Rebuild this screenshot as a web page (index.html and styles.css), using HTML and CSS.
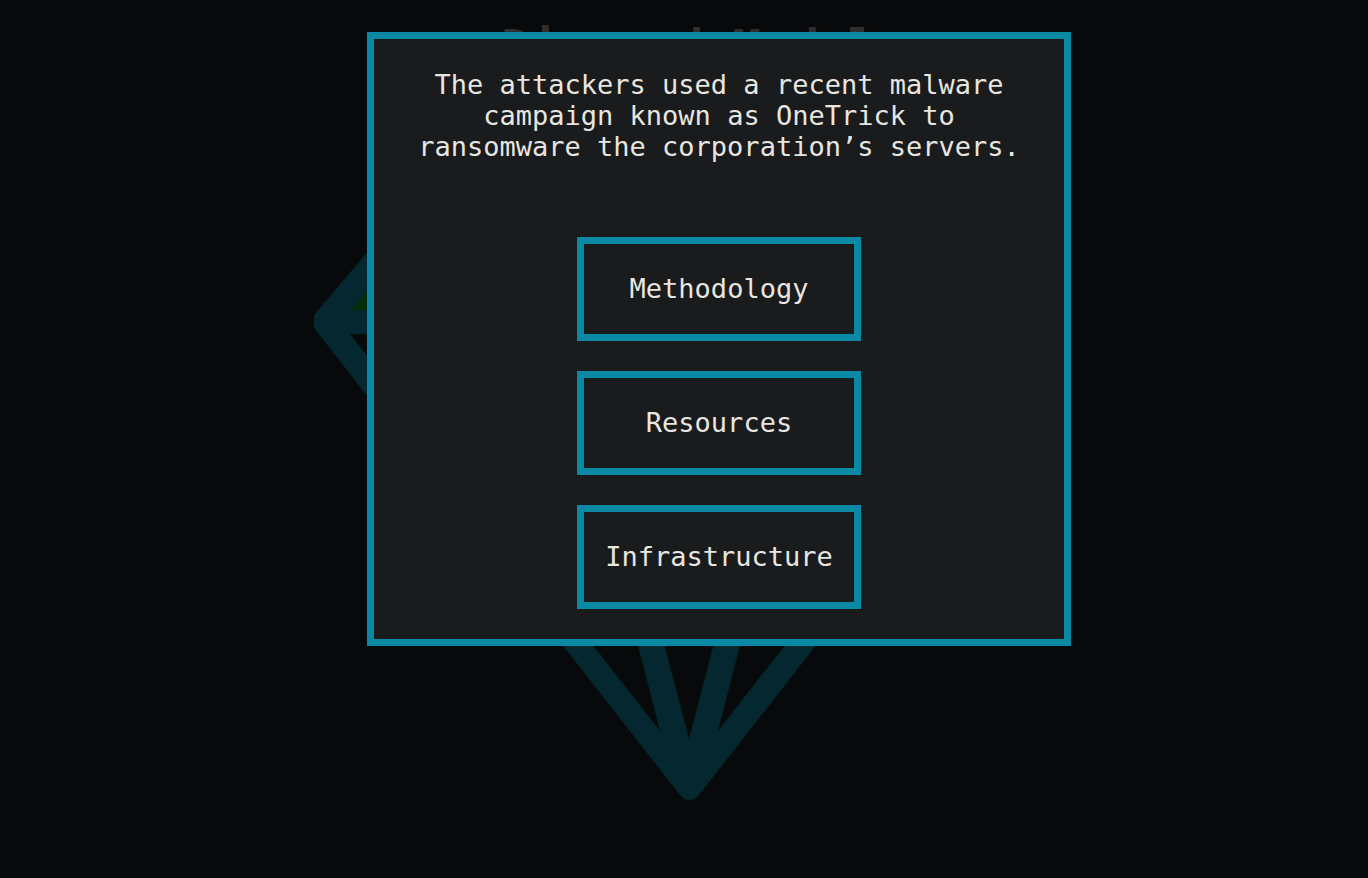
FILE: index.html
```html
<!DOCTYPE html>
<html lang="en">
<head>
<meta charset="utf-8">
<meta name="viewport" content="width=device-width, initial-scale=1">
<title>Diamond Model</title>
<link rel="stylesheet" href="styles.css">
</head>
<body>
<main class="stage">
  <h1 class="title">Diamond Model</h1>
  <svg class="diamond" width="750" height="704" viewBox="0 0 750 704" aria-hidden="true">
    <path class="facet" d="M32 219 178 50 240 219Z"/>
    <path class="frame" fill-rule="evenodd" d="M0 219 175 13H575L750 219V232L385 699Q380 704 375 704Q370 704 366 699L0 232ZM37 214H230L186 42ZM36 238 346 635 244 238ZM269 238 375 643 481 238ZM506 238 404 635 714 238ZM713 214 564 42 520 214ZM270 214H480L375 42Z"/>
  </svg>
</main>
<div class="overlay">
  <section class="dialog" role="dialog" aria-modal="true" aria-labelledby="clue">
    <p class="clue" id="clue">The attackers used a recent malware campaign known as OneTrick to ransomware the corporation’s servers.</p>
    <div class="choices">
      <button class="choice" type="button">Methodology</button>
      <button class="choice" type="button">Resources</button>
      <button class="choice" type="button">Infrastructure</button>
    </div>
  </section>
</div>
</body>
</html>
```

FILE: styles.css
```css
* {
  box-sizing: border-box;
}

body {
  margin: 0;
  min-height: 100vh;
  background: #07090a;
  color: #e8e6e1;
  font-family: "DejaVu Sans Mono", monospace;
}

.stage {
  display: flex;
  flex-direction: column;
  align-items: center;
  gap: 20px;
  padding: 18px 0 0 10px;
}

.title {
  margin: 0;
  color: #302f2d;
  font-size: 48px;
  line-height: 58px;
}

.diamond {
  display: block;
  max-width: 100%;
}

.facet {
  fill: #052d08;
}

.frame {
  fill: #052830;
  stroke: #062015;
  stroke-width: 0.5;
}

.overlay {
  position: fixed;
  inset: 0;
  display: flex;
  justify-content: center;
  align-items: flex-start;
  padding: 32px 0 32px 70px;
  overflow: auto;
}

.dialog {
  display: flex;
  flex-direction: column;
  align-items: center;
  gap: 75px;
  width: 100%;
  max-width: 704px;
  padding: 30px;
  border: 7px solid #0a89a5;
  background: #1a1b1c;
  font-size: 27px;
  line-height: 31px;
}

.clue {
  margin: 0;
  text-align: center;
}

.choices {
  display: grid;
  gap: 30px;
}

.choice {
  min-width: 284px;
  padding: 29px 20px 30px;
  border: 7px solid #0a89a5;
  border-radius: 0;
  background: #1a1b1c;
  color: inherit;
  font: inherit;
  cursor: pointer;
}
```
